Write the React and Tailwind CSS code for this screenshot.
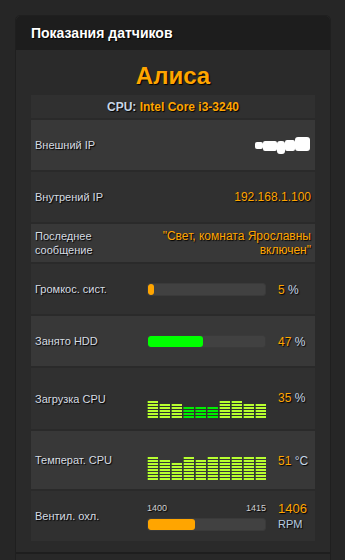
import React from 'react';

const shadow = '[text-shadow:1px_1px_1px_#000]';

const cpuBars = [6, 5, 5, 4, 4, 4, 6, 6, 5, 5];
const cpuGreen = [false, false, false, true, true, true, false, false, false, false];
const tempBars = [8, 7, 6, 8, 7, 8, 8, 8, 8, 8];

function Equalizer({ bars, max, green = [] }) {
  return (
    <div className="flex items-end gap-[1px]">
      {bars.map((n, i) => (
        <div key={i} className="flex flex-col gap-[1px] w-[11px]">
          {Array.from({ length: max }).map((_, j) => {
            const on = j >= max - n;
            if (!on) return <div key={j} className="h-[2px]" />;
            return (
              <div
                key={j}
                className={
                  green[i]
                    ? 'h-[2px] bg-[#00f000] border-l border-[#2f8a1f]'
                    : 'h-[2px] bg-[#b8ff30] border-l border-[#4f7f22]'
                }
              />
            );
          })}
        </div>
      ))}
    </div>
  );
}

function Bar({ pct, color }) {
  return (
    <div className="w-[119px] h-[13px] rounded-[3px] bg-[#414141] border border-[#3a3a3a] overflow-hidden">
      <div className={`h-full rounded-[3px] ${color}`} style={{ width: `${pct}%` }} />
    </div>
  );
}

function Value({ num, unit }) {
  return (
    <span className={`text-[12px] ${shadow}`}>
      <span className="text-[#ffa500]">{num}</span>{' '}
      <span className="text-[#c6d6e6]">{unit}</span>
    </span>
  );
}

function Row({ light, h, children, className = '' }) {
  return (
    <div
      className={`flex items-center px-1 ${h} ${light ? 'bg-[#383838]' : 'bg-[#303030]'} ${className}`}
    >
      {children}
    </div>
  );
}

function Label({ children }) {
  return (
    <div className={`w-[112px] text-[11px] leading-[14px] text-[#d6dce2] ${shadow}`}>{children}</div>
  );
}

// blurred-out external address
function Redacted() {
  return (
    <div className="flex items-center pr-[1px]">
      <div className="w-[8px] h-[7px] bg-white rounded-[2px] mt-[1px]" />
      <div className="w-[14px] h-[10px] bg-white rounded-[2px] mt-[2px]" />
      <div className="w-[8px] h-[13px] bg-white rounded-[3px] mt-[4px]" />
      <div className="w-[10px] h-[11px] bg-white rounded-[2px]" />
      <div className="w-[15px] h-[14px] bg-white rounded-[3px] -mt-[2px]" />
    </div>
  );
}

export default function App() {
  return (
    <div
      className="h-screen bg-[#262626] pt-[15px] px-[15px] overflow-hidden"
      style={{ fontFamily: '"Liberation Sans", Arial, sans-serif' }}
    >
      <div className="w-[316px] rounded-t-[5px] border border-[#1f1f1f] bg-[#2a2a2a]">
        <div className="h-[34px] flex items-center px-[15px] bg-[#1d1d1d] rounded-t-[5px]">
          <h2 className={`text-[14px] font-bold text-white ${shadow}`}>Показания датчиков</h2>
        </div>

        <div className="px-[15px] pb-[11px]">
          <div className="h-[45px] flex items-center justify-center">
            <span className={`text-[24px] font-bold text-[#ffa500] ${shadow} mt-[7px]`}>Алиса</span>
          </div>

          <div className="flex flex-col gap-[2px]">
            <Row h="h-[23px]" className="justify-center">
              <span className={`text-[12px] font-bold ${shadow}`}>
                <span className="text-[#c6d6e6]">CPU:</span>{' '}
                <span className="text-[#ffa500]">Intel Core i3-3240</span>
              </span>
            </Row>

            <Row light h="h-[50px]" className="justify-between">
              <Label>Внешний IP</Label>
              <Redacted />
            </Row>

            <Row h="h-[50px]" className="justify-between">
              <Label>Внутрений IP</Label>
              <span className={`text-[12px] text-[#ffa500] ${shadow}`}>192.168.1.100</span>
            </Row>

            <Row light h="h-[38px]" className="justify-between">
              <Label>
                Последнее
                <br />
                сообщение
              </Label>
              <span className={`w-[152px] text-right text-[12px] leading-[14px] text-[#ffa500] ${shadow}`}>
                "Свет, комната Ярославны включен"
              </span>
            </Row>

            <Row h="h-[50px]">
              <Label>Громкос. сист.</Label>
              <Bar pct={5} color="bg-[#ffa500]" />
              <div className="ml-[12px]">
                <Value num="5" unit="%" />
              </div>
            </Row>

            <Row light h="h-[50px]">
              <Label>Занято HDD</Label>
              <Bar pct={47} color="bg-[#00ff00]" />
              <div className="ml-[12px]">
                <Value num="47" unit="%" />
              </div>
            </Row>

            <Row h="h-[61px]">
              <Label>Загрузка CPU</Label>
              <div className="w-[119px] pt-[21px]">
                <Equalizer bars={cpuBars} max={6} green={cpuGreen} />
              </div>
              <div className="ml-[12px] -mt-[3px]">
                <Value num="35" unit="%" />
              </div>
            </Row>

            <Row light h="h-[58px]">
              <Label>Температ. CPU</Label>
              <div className="w-[119px] pt-[17px]">
                <Equalizer bars={tempBars} max={8} />
              </div>
              <div className="ml-[12px]">
                <Value num="51" unit="°C" />
              </div>
            </Row>

            <Row h="h-[50px]">
              <Label>Вентил. охл.</Label>
              <div className="w-[119px] flex flex-col mt-[1px]">
                <div className={`flex justify-between text-[9px] leading-[12px] text-[#d0d0d0] ${shadow}`}>
                  <span>1400</span>
                  <span>1415</span>
                </div>
                <div className="mt-[4px]">
                  <Bar pct={40} color="bg-[#ffa500]" />
                </div>
              </div>
              <div className={`ml-[12px] flex flex-col ${shadow}`}>
                <span className="text-[13px] leading-[16px] text-[#ffa500]">1406</span>
                <span className="text-[11px] leading-[14px] text-[#b8cce0]">RPM</span>
              </div>
            </Row>
          </div>
        </div>

        <div className="border-t-2 border-[#1e1e1e] h-[8px] bg-[#282828]" />
      </div>
    </div>
  );
}
